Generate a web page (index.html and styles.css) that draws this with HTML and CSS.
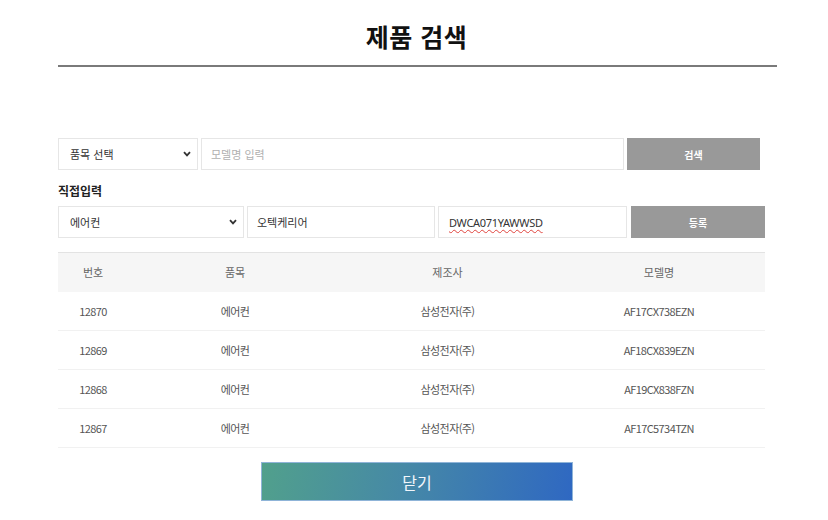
FILE: index.html
```html
<!DOCTYPE html>
<html lang="ko">
<head>
<meta charset="utf-8">
<title>제품 검색</title>
<link rel="stylesheet" href="styles.css">
</head>
<body>
<div class="page">
  <header class="head">
    <h1 class="title">제품 검색</h1>
  </header>

  <div class="search-row">
    <div class="select sel-a">
      <span>품목 선택</span>
      <svg class="chev" width="8" height="6" viewBox="0 0 8 6"><path d="M1 1.2 L4 4.4 L7 1.2" fill="none" stroke="#333" stroke-width="1.8"/></svg>
    </div>
    <div class="field field-model placeholder">모델명 입력</div>
    <button class="btn btn-search">검색</button>
  </div>

  <div class="label">직접입력</div>

  <div class="search-row">
    <div class="select sel-b">
      <span>에어컨</span>
      <svg class="chev" width="8" height="6" viewBox="0 0 8 6"><path d="M1 1.2 L4 4.4 L7 1.2" fill="none" stroke="#333" stroke-width="1.8"/></svg>
    </div>
    <div class="field field-maker">오텍케리어</div>
    <div class="field field-code"><span class="spell">DWCA071YAWWSD</span></div>
    <button class="btn btn-reg">등록</button>
  </div>

  <table class="list">
    <thead>
      <tr><th class="c1">번호</th><th class="c2">품목</th><th class="c3">제조사</th><th class="c4">모델명</th></tr>
    </thead>
    <tbody>
      <tr><td>12870</td><td>에어컨</td><td>삼성전자(주)</td><td>AF17CX738EZN</td></tr>
      <tr><td>12869</td><td>에어컨</td><td>삼성전자(주)</td><td>AF18CX839EZN</td></tr>
      <tr><td>12868</td><td>에어컨</td><td>삼성전자(주)</td><td>AF19CX838FZN</td></tr>
      <tr><td>12867</td><td>에어컨</td><td>삼성전자(주)</td><td>AF17C5734TZN</td></tr>
    </tbody>
  </table>

  <div class="foot">
    <button class="btn-close">닫기</button>
  </div>
</div>
</body>
</html>
```

FILE: styles.css
```css
* { box-sizing: border-box; }
html, body { margin: 0; padding: 0; background: #fff; }
body {
  font-family: "Noto Sans CJK KR", "Noto Sans", sans-serif;
  color: #333;
  width: 828px;
  height: 520px;
  overflow: hidden;
}
.page { padding: 0 0 0 58px; }

.head {
  width: 719px;
  height: 67px;
  border-bottom: 2px solid #7a7a7a;
  display: flex;
  justify-content: center;
  padding-top: 19px;
}
.title {
  margin: 0 0 0 -2px;
  font-size: 25px;
  line-height: 34px;
  font-weight: 700;
  color: #111;
  letter-spacing: 0.5px;
}

.search-row {
  display: flex;
  height: 32px;
  gap: 3px;
}
.head + .search-row { margin-top: 71px; }

.select, .field {
  height: 32px;
  border: 1px solid #e6e6e6;
  background: #fff;
  font-size: 11px;
  color: #333;
  display: flex;
  align-items: center;
}
.select {
  justify-content: space-between;
  padding: 0 6px 0 11px;
}
.sel-a { width: 140px; }
.sel-b { width: 186px; }
.chev { display: block; }

.field { padding: 0 9px; }
.field-model { width: 423px; }
.placeholder { color: #b0b0b0; }
.field-maker { width: 188px; }
.field-code { width: 189px; padding-left: 10px; }
.spell {
  text-decoration: underline wavy #e0443e;
  text-decoration-thickness: 1px;
  text-underline-offset: 2px;
  color: #333;
  font-family: "Noto Sans", "Noto Sans CJK KR", sans-serif;
  letter-spacing: -0.3px;
}

.btn {
  height: 32px;
  border: 0;
  background: #999;
  color: #fff;
  font-family: inherit;
  font-size: 10px;
  font-weight: 700;
  cursor: pointer;
  padding: 0;
}
.btn-search { width: 133px; }
.btn-reg { width: 134px; margin-left: 1px; }

.label {
  margin-top: 14px;
  height: 22px;
  font-size: 12px;
  font-weight: 700;
  color: #222;
  line-height: 14px;
}
.label + .search-row { margin-top: 0; }

.list {
  margin-top: 14px;
  width: 707px;
  border-collapse: collapse;
  table-layout: fixed;
  font-size: 11px;
  color: #555;
}
.list thead tr { border-top: 1px solid #e3e3e3; background: #f6f6f6; }
.list th {
  height: 39px;
  font-weight: 400;
  color: #666;
}
.list td {
  height: 39px;
  text-align: center;
  border-bottom: 1px solid #f1f1f1;
  letter-spacing: -0.6px;
}
.c1 { width: 70px; }
.c2 { width: 214px; }
.c3 { width: 211px; }
.c4 { width: 212px; }

.foot {
  padding-top: 14px;
  padding-left: 203px;
}
.btn-close {
  width: 312px;
  height: 39px;
  border: 1px solid #8fb4d8;
  background: linear-gradient(100deg, #51a08c 0%, #4689a6 45%, #2f68c2 100%);
  color: #f2f6fb;
  font-family: inherit;
  font-size: 16px;
  padding: 0;
  cursor: pointer;
}
```
